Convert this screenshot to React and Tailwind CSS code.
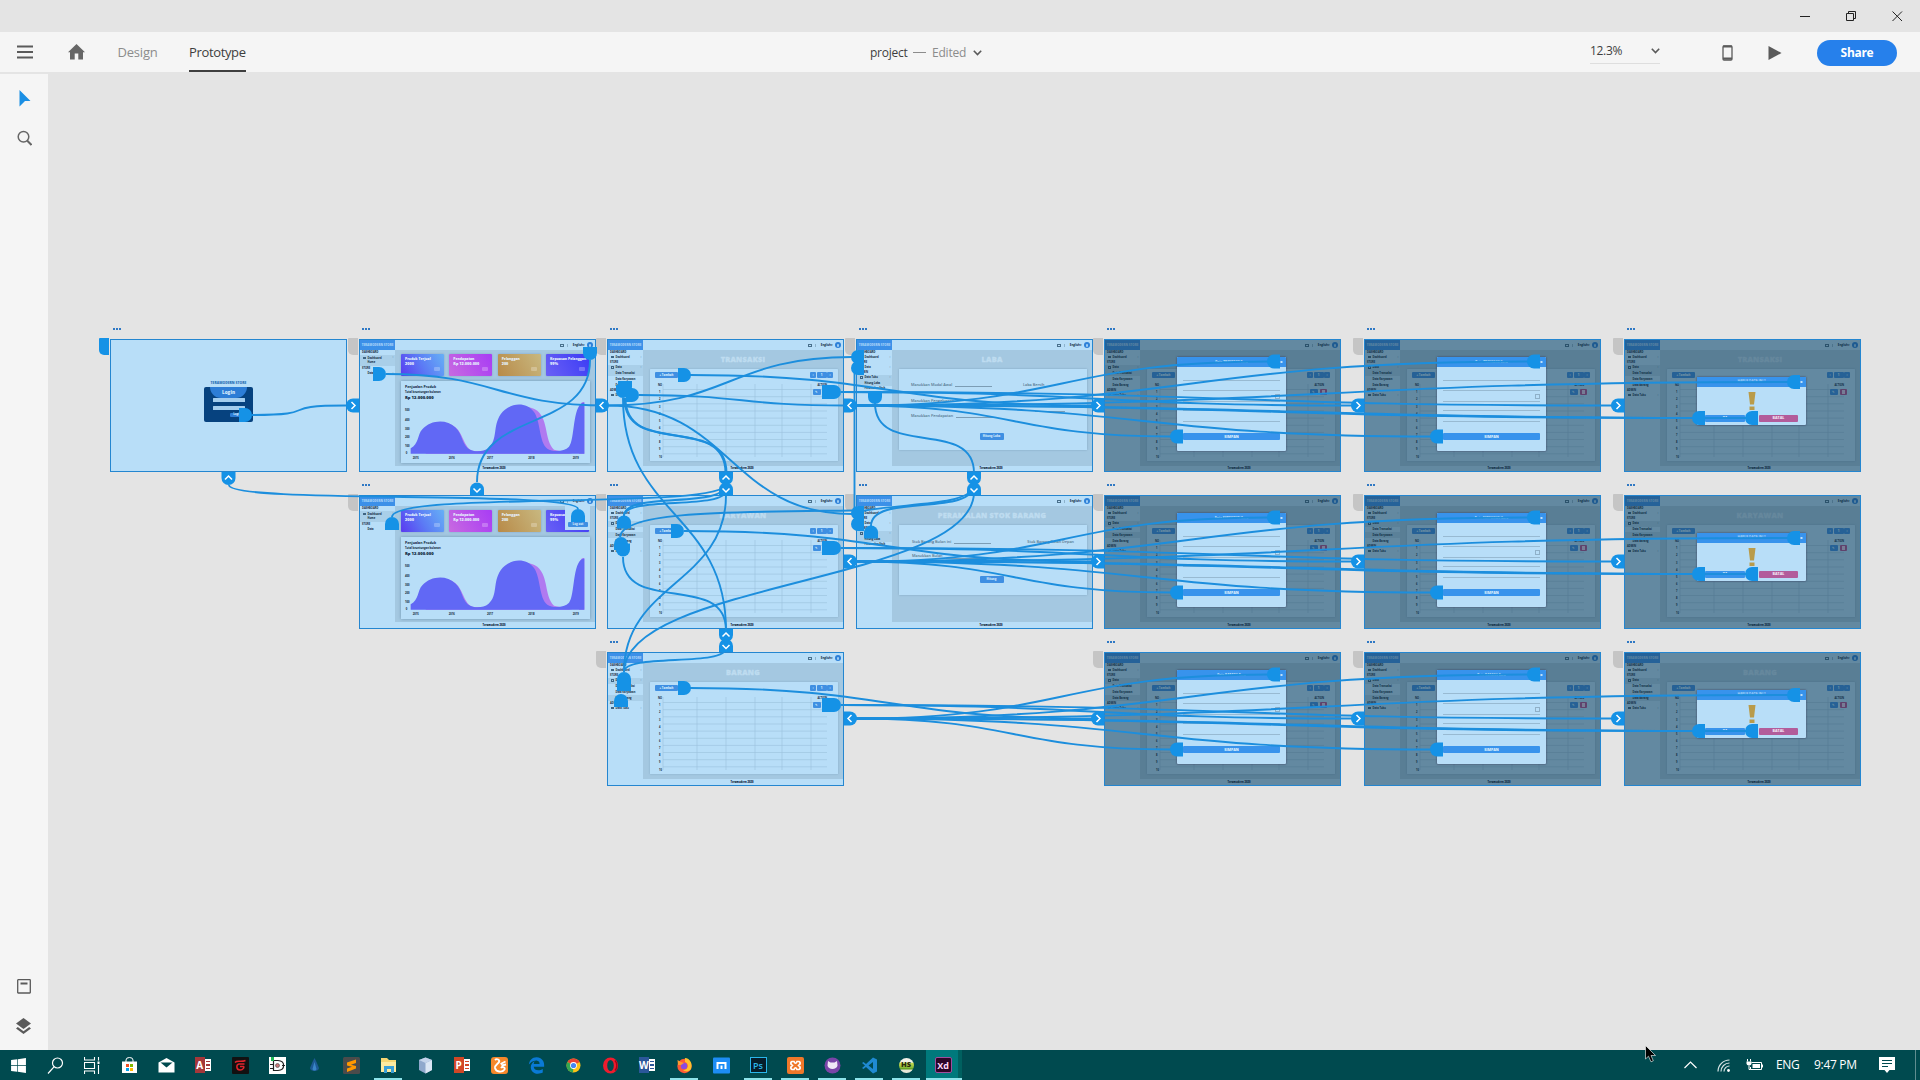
import React from 'react';
import { FaEdgeLegacy, FaWindows } from 'react-icons/fa6';

const X = { c1: 110, c2: 359, c3: 607, c4: 856, c5: 1104, c6: 1364, c7: 1624 };
const Y = [339, 495, 652];

/* ---------- artboard pieces ---------- */

function MenuRow({ label, head, sub, hi, arrow, h = 'h-[5.6px]' }) {
  return (
    <div className={`flex items-center shrink-0 ${h} ${hi ? 'bg-[#a9cfe9]' : ''} ${head ? 'pl-[2px]' : sub ? 'pl-[7.5px]' : 'pl-[3px]'}`}>
      {!head && !sub && <span className="mr-[2px] h-[2.6px] w-[2.6px] border-[0.5px] border-[#3f6482]" />}
      <span className="text-[2.6px] leading-none font-bold whitespace-nowrap text-[#10293d]">{label}</span>
      {arrow && <span className="ml-auto mr-[1.5px] text-[3px] leading-none text-[#3d617c]">›</span>}
    </div>
  );
}

function Sidebar({ kind }) {
  if (kind === 'dash') {
    return (
      <div className="flex h-full w-[35px] shrink-0 flex-col">
        <MenuRow head label="DASHBOARD" h="h-[5px]" />
        <div className="bg-[#a9cfe9] pb-[1px]"><MenuRow label="Dashboard" arrow /><MenuRow sub label="Home" h="h-[4px]" /></div>
        <MenuRow head label="STORE" h="h-[5px]" />
        <MenuRow sub label="Data" h="h-[6px]" arrow />
      </div>
    );
  }
  const form = kind === 'form';
  return (
    <div className="flex h-full w-[35px] shrink-0 flex-col">
      <MenuRow head label="DASHBOARD" h="h-[4.5px]" />
      <MenuRow label="Dashboard" arrow h="h-[5px]" />
      <MenuRow head label="STORE" h="h-[5px]" />
      <MenuRow label="Data" arrow hi={!form} h="h-[6px]" />
      {form ? (
        <>
          <MenuRow head label="ADMIN" h="h-[4px]" />
          <MenuRow label="Data Toko" arrow hi h="h-[5.5px]" />
          <MenuRow sub label="Hitung Laba" hi />
          <MenuRow sub label="Peramalan Stok" />
        </>
      ) : (
        <>
          <MenuRow sub label="Data Transaksi" hi={kind === 'TRANSAKSI'} />
          <MenuRow sub label="Data Karyawan" hi={kind === 'KARYAWAN'} h="h-[6px]" />
          <MenuRow sub label="Data Barang" hi={kind === 'BARANG'} h="h-[6px]" />
          <MenuRow head label="ADMIN" h="h-[5px]" />
          <MenuRow label="Data Toko" arrow h="h-[4px]" />
        </>
      )}
    </div>
  );
}

function BoardHeader() {
  return (
    <div className="flex h-[10px] shrink-0 items-center">
      <div className="flex h-full w-[35px] items-center justify-center bg-[#3c90e8]">
        <span className="whitespace-nowrap text-[3px] leading-none font-black text-[#a5d2f8]">TERAMODERN STORE</span>
      </div>
      <div className="ml-auto mr-[2px] flex items-center">
        <span className="h-[3px] w-[3.6px] border-[0.5px] border-[#49708c]" />
        <span className="ml-[3px] mr-[5px] h-[3px] w-[1px] bg-[#8db3cd]" />
        <span className="text-[2.8px] leading-none font-bold text-[#0c2438]">English ▾</span>
        <span className="ml-[1.5px] flex h-[6px] w-[6px] items-center justify-center rounded-full bg-[#2d80d8]">
          <span className="h-[3px] w-[2px] rounded-full bg-[#9ccdf5]" />
        </span>
      </div>
    </div>
  );
}

function Pill({ children, cls }) {
  return (
    <span className={`flex items-center justify-center rounded-[1px] bg-[#3f8fe2] text-[2.8px] leading-none font-black text-[#cfe8fb] ${cls}`}>
      {children}
    </span>
  );
}

function TableCard() {
  return (
    <div className="ml-[7px] mr-[5px] h-[92px] shrink-0 rounded-[0.5px] bg-[#b8def8] px-[5px] pt-[3px] shadow-[0_0_2px_#7ea6c0]">
      <div className="flex h-[6px] justify-between">
        <Pill cls="w-[23px] h-[6px]">+ Tambah</Pill>
        <div className="flex gap-[0.5px]">
          <Pill cls="w-[6px] h-[6px]">‹</Pill>
          <Pill cls="w-[10px] h-[6px]">1</Pill>
          <Pill cls="w-[6px] h-[6px]">›</Pill>
        </div>
      </div>
      <div className="mt-[4.5px] flex h-[5px] items-center justify-between pl-[3px] pr-[6px] text-[2.5px] leading-none font-bold text-[#0c2438]">
        <span>NO</span><span>ACTION</span>
      </div>
      <div className="relative mt-[1.5px] h-[72px]">
        {[1, 2, 3, 4, 5, 6, 7, 8, 9, 10].map((n) => (
          <div key={n} className="ml-[3px] mr-[6px] flex h-[7.15px] items-center pl-[1px]">
            <span className="text-[2.5px] leading-none font-bold text-[#0c2438]">{n}</span>
          </div>
        ))}
        <svg className="absolute left-0 top-[-5.5px] h-[78px] w-[178px]" viewBox="0 0 178 78" stroke="#9ac1dc" strokeWidth="0.6">
          <path d="M8 0V73M42 0V73M71 0V73M100 0V73M127 0V73M156 0V73" />
          <path d="M8 5.500H172M8 12.700H172M8 19.800H172M8 27H172M8 34.100H172M8 41.300H172M8 48.400H172M8 55.500H172M8 62.700H172M8 69.800H172" />
        </svg>
        <div className="absolute right-[3px] top-0 flex gap-[2px]">
          <Pill cls="w-[7.5px] h-[6px]">✎</Pill>
          <span className="flex h-[6px] w-[7.5px] items-center justify-center rounded-[1px] bg-[#b0508f]"><span className="h-[3.5px] w-[2.6px] bg-[#e0c5e0]" /></span>
        </div>
      </div>
    </div>
  );
}

function BoardTitle({ children }) {
  return (
    <div className="flex h-[19px] shrink-0 items-center justify-center pt-[0.5px] text-[7.4px] leading-none font-black tracking-[0.25px] whitespace-nowrap text-[#bedcf0] [-webkit-text-stroke:0.35px_#bedcf0]">
      {children}
    </div>
  );
}

function Field({ label, line }) {
  return (
    <div className="flex items-end gap-[3px] text-[3.8px] leading-none font-semibold whitespace-nowrap text-[#51748d]">
      <span>{label}</span>
      {line && <span className="h-[0.6px] w-[37px] bg-[#7c9db5]" />}
    </div>
  );
}

function LabaCard() {
  return (
    <div className="ml-[7px] mr-[5px] flex h-[81px] flex-col bg-[#b8def8] px-[12px] pt-[14px] shadow-[0_0_2px_#7ea6c0]">
      <div className="flex justify-between"><Field label="Masukkan Modal Awal" line /><Field label="Laba Bersih" /><span /></div>
      <div className="mt-[12.5px] flex"><Field label="Masukkan Pengeluaran" /></div>
      <div className="mt-[8px] flex justify-between"><span /><span className="mr-[10px] h-[0.6px] w-[30px] bg-[#7c9db5]" /></div>
      <div className="mt-[2.5px]"><Field label="Masukkan Pendapatan" line /></div>
      <div className="mt-[15px] flex justify-center pr-[3px]"><Pill cls="w-[24px] h-[7px]">Hitung Laba</Pill></div>
    </div>
  );
}

function StokCard() {
  return (
    <div className="ml-[7px] mr-[5px] flex h-[70px] flex-col bg-[#b8def8] px-[13px] pt-[14.5px] shadow-[0_0_2px_#7ea6c0]">
      <div className="flex justify-between"><Field label="Stok Barang Bulan ini" line /><Field label="Stok Barang Bulan Depan" /></div>
      <div className="mt-[11px]"><Field label="Masukkan Bulan" line /></div>
      <div className="mt-[17.5px] flex justify-center pr-[3px]"><Pill cls="w-[24px] h-[7px]">Hitung</Pill></div>
    </div>
  );
}

const CARDS = [
  ['Produk Terjual', '2000', 'bg-[linear-gradient(60deg,#5a3af0,#5c7cf5_50%,#66b0f6)]'],
  ['Pendapatan', 'Rp 12.000.000', 'bg-[linear-gradient(60deg,#c86ae0,#a83cf5)]'],
  ['Pelanggan', '200', 'bg-[linear-gradient(60deg,#b88a48,#c8b880)]'],
  ['Kepuasan Pelanggan', '99%', 'bg-[linear-gradient(60deg,#6a60f5,#3c3cf5)]'],
];

function Dashboard({ popup }) {
  return (
    <div className="flex grow flex-col">
      <div className="flex justify-between pl-[6px] pr-[6px] pt-[3.5px]">
        {CARDS.map(([a, b, bg]) => (
          <div key={a} className={`flex h-[22px] w-[43px] flex-col rounded-[1px] pl-[4px] pt-[3px] font-black text-[#e6f1fd] shadow-[0_0_2px_#7a9cc0] ${bg}`}>
            <span className="text-[3.4px] leading-[4px] whitespace-nowrap">{a}</span>
            <span className="text-[3.8px] leading-[5px] whitespace-nowrap">{b}</span>
            <span className="ml-auto mr-[4px] mt-[1px] h-[4.5px] w-[6px] rounded-[1px] bg-[#ffffff40]" />
          </div>
        ))}
      </div>
      <div className="relative ml-[6px] mt-[5.5px] h-[82px] w-[189px] bg-[#b8def8] pl-[4px] pt-[4px] font-bold text-[#0c2438] shadow-[0_0_3px_#6f97b2]">
        <div className="text-[3.5px] leading-[4.5px]">Penjualan Produk</div>
        <div className="text-[2.7px] leading-[4px] font-bold">Total keuntungan bulanan</div>
        <div className="mt-[1.5px] text-[4.2px] leading-[6px] font-black">Rp 12.000.000</div>
        <svg className="absolute inset-0 h-[82px] w-[189px]" viewBox="126 125 567 246">
          <g fill="#b07af0">
            <path d="M200 343C225 290 215 248 262 251C310 262 305 300 330 328C340 337 350 335 372 335C415 335 430 300 465 240C485 195 505 198 535 214C570 245 555 300 585 331L640 343Z" />
            <path d="M660 343V215Q662 190 672 188H676V343Z" />
          </g>
          <path fill="#6168f5" d="M155 343V327C180 315 175 285 190 270C215 242 262 238 290 265C312 285 308 320 335 332C350 338 375 337 388 326C418 300 400 262 425 225C450 190 500 185 525 218C545 245 540 310 565 328C580 338 615 338 630 322C648 300 640 200 672 190H676V343Z" />
          <g fontSize="8" fontWeight="700" fill="#0c2438">
            <text x="138" y="216">500</text><text x="138" y="246">400</text><text x="138" y="273">300</text><text x="138" y="297">200</text><text x="138" y="324">100</text><text x="140" y="345">0</text>
            <text x="161" y="360">2015</text><text x="269" y="360">2016</text><text x="384" y="360">2017</text><text x="508" y="360">2018</text><text x="641" y="360">2019</text>
          </g>
        </svg>
      </div>
      {popup && (
        <div className="absolute right-[5px] top-[9px] flex h-[25px] w-[25px] flex-col justify-end bg-[#b8def8] p-[3px]">
          <Pill cls="h-[5px] w-[20px]">Log out</Pill>
        </div>
      )}
    </div>
  );
}

function FormModal({ title }) {
  return (
    <div className="absolute left-[72px] top-[17px] flex h-[94px] w-[109px] flex-col rounded-[1px] bg-[#b8def8] shadow-[0_0_2px_#335]">
      <div className="flex h-[10px] items-center justify-center rounded-t-[1px] bg-[#3893ec] text-[3px] leading-none font-bold text-[#cfe8fb]">
        {title}
      </div>
      <div className="flex grow flex-col px-[6px]">
        <span className="h-[14px] border-b-[0.7px] border-[#98bad2]" />
        <span className="h-[10px] border-b-[0.7px] border-[#98bad2]" />
        <span className="flex h-[10px] items-center justify-end"><span className="h-[5px] w-[5px] border-[1px] border-[#8fb0c8]" /></span>
        <span className="h-[10px] border-y-[0.7px] border-[#98bad2]" />
        <span className="h-[11px] border-b-[0.7px] border-[#98bad2]" />
        <span className="mt-[11px] flex h-[7px] items-center justify-center rounded-[1px] bg-[#3893ec] text-[3.6px] leading-none font-black text-[#dceefc]">SIMPAN</span>
      </div>
    </div>
  );
}

function WarnModal() {
  return (
    <div className="absolute left-[72px] top-[37px] flex h-[48px] w-[109px] flex-col rounded-[1px] bg-[#b8def8] shadow-[0_0_2px_#335]">
      <div className="flex h-[10px] items-center justify-center bg-[#3893ec] text-[3.2px] leading-none font-bold text-[#a5d2f8]">HAPUS DATA INI ?</div>
      <svg className="mx-auto mt-[5px] h-[18px] w-[8px]" viewBox="0 0 8 18" fill="#b99b4a"><path d="M0.5 0H7.5L6 12.5H2ZM1.5 14.5H6.5V18H1.5Z" /></svg>
      <div className="mt-[4.5px] flex gap-[14px] px-[8px]">
        <span className="flex h-[7px] w-[40px] items-center justify-center rounded-[1px] bg-[#3893ec] text-[3.4px] leading-none font-black text-[#cfe8fb]">YA</span>
        <span className="flex h-[7px] w-[39px] items-center justify-center rounded-[1px] bg-[#b25c9b] text-[3.6px] leading-none font-black text-[#f2e2f2]">BATAL</span>
      </div>
    </div>
  );
}

function Artboard({ x, y, kind, title, modal, popup }) {
  const dark = !!modal;
  return (
    <>
      <div className="absolute flex gap-[1px]" style={{ left: x + 3, top: y - 11 }}>
        <i className="h-[2px] w-[2px] bg-[#2f78c4]" /><i className="h-[2px] w-[2px] bg-[#2f78c4]" /><i className="h-[2px] w-[2px] bg-[#2f78c4]" />
      </div>
      <div
        className={`absolute h-[17px] w-[10px] rounded-bl-[5px] rounded-tl-[1px] ${kind === 'login' ? 'bg-[#1592e6]' : 'bg-[#c5c5c5]'}`}
        style={{ left: x - 11, top: y - 1 }}
      />
      <div
        className={`absolute flex w-[237px] flex-col overflow-hidden border border-[#2486d0] bg-[#b8def8] ${y === Y[0] ? 'h-[133px]' : 'h-[134px]'}`}
        style={{ left: x, top: y }}
      >
        {kind === 'login' ? (
          <div className="flex h-full flex-col items-center pt-[39.5px]">
            <span className="text-[3.4px] leading-[5px] font-black text-[#2a6fb5]">TERAMODERN STORE</span>
            <div className="mt-[2px] flex h-[35px] w-[49px] flex-col items-center overflow-hidden rounded-[2px] bg-[#06427f]">
              <div className="flex h-[11px] w-[37px] shrink-0 items-center justify-center rounded-b-[18px] bg-[#2d7dd6] text-[4.6px] leading-none font-black text-[#d5eafb]">Login</div>
              <span className="mt-[0.5px] h-[4px] w-[32px] rounded-[0.5px] bg-[#a3cdee]" />
              <span className="mt-[3.5px] h-[4px] w-[32px] rounded-[0.5px] bg-[#a3cdee]" />
              <span className="mt-[3px] ml-[17px] flex h-[4.5px] w-[15px] items-center justify-center rounded-[1px] bg-[#2d7dd6] text-[2.8px] leading-none font-bold text-[#d5eafb]">Login</span>
            </div>
          </div>
        ) : (
          <>
            <BoardHeader />
            <div className="flex min-h-0 grow">
              <Sidebar kind={kind === 'table' ? title : kind} />
              <div className="flex grow flex-col">
                <div className="flex h-[116px] shrink-0 flex-col bg-[#a4c8e1]">
                  {kind === 'dash' ? <Dashboard popup={popup} /> : (
                    <>
                      <BoardTitle>{modal === 'form' ? '' : title}</BoardTitle>
                      {kind === 'table' && <TableCard />}
                      {title === 'LABA' && <LabaCard />}
                      {title === 'PERAMALAN STOK BARANG' && <StokCard />}
                    </>
                  )}
                </div>
                <div className="flex grow items-center justify-center pr-[2px] text-[2.6px] leading-none font-black text-[#0c2438]">Teramodern 2020</div>
              </div>
            </div>
          </>
        )}
        {dark && <div className="absolute inset-0 bg-[#0e344a]/50" />}
        {modal === 'form' && <FormModal title={`Data ${title} Baru`} />}
        {modal === 'warn' && <WarnModal />}
      </div>
    </>
  );
}

const BOARDS = [
  { x: X.c1, y: Y[0], kind: 'login' },
  { x: X.c2, y: Y[0], kind: 'dash' },
  { x: X.c2, y: Y[1], kind: 'dash', popup: true },
  { x: X.c4, y: Y[0], kind: 'form', title: 'LABA' },
  { x: X.c4, y: Y[1], kind: 'form', title: 'PERAMALAN STOK BARANG' },
];
['TRANSAKSI', 'KARYAWAN', 'BARANG'].forEach((title, i) => {
  BOARDS.push({ x: X.c3, y: Y[i], kind: 'table', title });
  BOARDS.push({ x: X.c5, y: Y[i], kind: 'table', title, modal: 'form' });
  BOARDS.push({ x: X.c6, y: Y[i], kind: 'table', title, modal: 'form' });
  BOARDS.push({ x: X.c7, y: Y[i], kind: 'table', title, modal: 'warn' });
});

/* ---------- prototype wires ---------- */

/* short wires get proportionally longer handles, so they bend harder in the middle */
const handle = (d) => d * Math.min(0.8, Math.max(0.5, 73 / Math.abs(d)));
const hWire = (x1, y1, x2, y2) => {
  const k = handle(x2 - x1);
  return `M${x1} ${y1}C${x1 + k} ${y1} ${x2 - k} ${y2} ${x2} ${y2}`;
};
const vWire = (x1, y1, x2, y2) => {
  const k = handle(y2 - y1);
  return `M${x1} ${y1}C${x1} ${y1 + k} ${x2} ${y2 - k} ${x2} ${y2}`;
};

const WIRES = [
  hWire(252, 415, 346, 405.5),
  hWire(386, 374, 608, 405.5),
  hWire(608, 405.5, 852, 357),
  hWire(608, 405.5, 852, 514),
  hWire(639, 395, 845, 405.5),
  'M854.5 372V512',
  vWire(875, 403, 974, 473),
  vWire(590, 360, 477, 482),
  vWire(229, 485, 578, 509),
  vWire(392, 517, 726, 484),
  vWire(624, 516, 726, 484),
  vWire(624, 516, 726, 490),
  vWire(623, 557, 726, 630),
  'M620 537C622 511 730 512 852 510.5',
  vWire(623, 398, 726, 630),
  vWire(624.5, 398, 725.5, 473),
  vWire(625.5, 398, 726.5, 473),
  vWire(726, 495, 624, 672),
  vWire(624, 672, 726, 648),
  vWire(624, 672, 974, 492),
  vWire(871, 526, 974, 484),
  'M862 511C905 503 966 506 974 487',
];
Y.forEach((y, i) => {
  const m = y + 66.5;
  WIRES.push(
    hWire(i === 1 ? 684 : 690, y + 36, 1092, m),
    hWire(841, y + 53, 1352, m),
    hWire(841, y + 53, 1612, m),
    hWire(856, m, 1268, y + 22.5),
    hWire(856, m, 1171, y + 97.5),
    hWire(856, m, 1528, y + 22.5),
    hWire(856, m, 1431, y + 97.5),
    hWire(856, m, 1788, y + 43),
    hWire(856, m, 1692, y + 79),
    hWire(856, m, 1746, y + 79),
  );
});

/* the key names the rounded side: right, left, top, bottom */
const SHAPES = {
  r: 'M0 0H6A7 7 0 0 1 6 14H0Z',
  l: 'M13 0H7A7 7 0 0 0 7 14H13Z',
  t: 'M0 13V7A7 7 0 0 1 14 7V13Z',
  b: 'M0 0V6A7 7 0 0 0 14 6V0Z',
};
const CHEV = { '>': 'M5.5 3.5L9 7L5.5 10.5', '<': 'M7.5 3.5L4 7L7.5 10.5', '^': 'M3.5 7.5L7 4L10.5 7.5', v: 'M3.5 6L7 9.5L10.5 6' };

const NODES = [
  [239, 408, 'r'], [346, 398.5, 'l', '>'], [373, 367, 'r'], [596, 398.5, 'r', '<'],
  [583, 347, 'b'], [470, 482.5, 't', 'v'], [221.5, 472, 'b', '^'], [571, 509, 't'], [385, 517, 't'],
  [617, 515.5, 't'], [614, 537, 't'], [616, 543.5, 'b'],
  [616, 385, 'b'], [618, 381, 'b'], [626, 388, 'r'],
  [851, 350, 'l'], [851, 361, 'l'], [851, 506, 'l'], [851, 517, 'l'],
  [868, 391, 'b'], [864, 525.5, 't'],
  [617, 672, 't'], [617, 678, 't'], [614, 694, 't'],
  [719, 472, 'b', '^'], [719, 482.5, 't', 'v'], [967, 472, 'b', '^'], [967, 482.5, 't', 'v'],
  [719, 629, 'b', '^'], [719, 639, 't', 'v'],
];
Y.forEach((y, i) => {
  NODES.push(
    [i === 1 ? 671 : 678, y + 29, 'r'], [822, y + 46, 'r'], [828, y + 46, 'r'],
    [844, y + 59.5, 'r', '<'], [1091, y + 59.5, 'l', '>'], [1351, y + 59.5, 'l', '>'], [1611, y + 59.5, 'l', '>'],
    [1267, y + 15.5, 'l'], [1170, y + 90.5, 'l'], [1527, y + 15.5, 'l'], [1430, y + 90.5, 'l'],
    [1787, y + 36, 'l'], [1692, y + 72, 'l'], [1745, y + 72, 'l'],
  );
});

function Wires() {
  return (
    <svg className="pointer-events-none absolute left-0 top-0 h-[1080px] w-[1920px]" viewBox="0 0 1920 1080" fill="none">
      <g stroke="#1c8edd" strokeWidth="1.9">{WIRES.map((d, i) => <path key={i} d={d} />)}</g>
      {NODES.map(([x, y, s, c], i) => (
        <g key={i} transform={`translate(${x} ${y})`}>
          <path d={SHAPES[s]} fill="#1592e6" />
          {c && <path d={CHEV[c]} stroke="#fff" strokeWidth="1.5" />}
        </g>
      ))}
      <g fill="#bfe0f8">
        {Y.map((y) => <path key={y} d={`M1280.5 ${y + 22}h2v2h-2zM1540.5 ${y + 22}h2v2h-2zM1800.5 ${y + 42}h2v2h-2z`} />)}
      </g>
    </svg>
  );
}

/* ---------- application chrome ---------- */

function TitleBar() {
  return (
    <div className="flex h-8 shrink-0 items-center justify-end bg-[#e4e4e4]">
      <svg className="h-8 w-[140px]" viewBox="0 0 140 32" fill="none" stroke="#222" strokeWidth="1">
        <path d="M20 16.500H30" />
        <path d="M66.500 13.500H73.500V20.500H66.500ZM68.500 13.500V11.500H75.500V18.500H73.500" />
        <path d="M112.500 11.500L122 21M122 11.500L112.500 21" />
      </svg>
    </div>
  );
}

function Chevron() {
  return <svg className="h-[6px] w-[9px]" viewBox="0 0 9 6" fill="none" stroke="#5a5a5a" strokeWidth="1.6"><path d="M0.800 0.800L4.500 4.600L8.200 0.800" /></svg>;
}

function Toolbar() {
  return (
    <div className="flex h-[40px] shrink-0 items-center bg-[#f5f5f5] text-[13px] text-[#3e3e3e]">
      <div className="flex w-[660px] items-center self-stretch pl-[17px]">
        <svg className="h-[14px] w-4" viewBox="0 0 16 14" fill="#5a5a5a"><path d="M0 0.500H16V2.500H0ZM0 6H16V8H0ZM0 11.500H16V13.500H0Z" /></svg>
        <svg className="ml-[34.5px] h-[16px] w-[17px]" viewBox="0 0 17 16" fill="#666"><path d="M8.500 0L17 8.200H15V15.500H10.300V9.500H6.700V15.500H2V8.200H0Z" /></svg>
        <span className="ml-[33px] w-[40px] pt-[1px] whitespace-nowrap tracking-[-0.2px] text-[#8c8c8c]">Design</span>
        <span className="ml-[31.5px] flex w-[57px] items-center self-stretch whitespace-nowrap border-b-2 border-[#3e3e3e] pt-[3px] tracking-[-0.35px]">Prototype</span>
      </div>
      <div className="flex grow items-center pl-[210px] pt-[1px] text-[12px] whitespace-nowrap">
        <span className="w-[43px] tracking-[-0.25px]">project</span>
        <span className="mr-[6px] h-px w-[13px] bg-[#8c8c8c]" />
        <span className="w-[41px] tracking-[-0.2px] text-[#8c8c8c]">Edited</span>
        <Chevron />
      </div>
      <div className="flex h-[24px] w-[70px] items-center justify-between border-b border-[#dedede] pb-[1px] text-[12px] tracking-[-0.3px]">
        <span>12.3%</span><Chevron />
      </div>
      <svg className="ml-[62px] mt-[1px] h-[16px] w-[11px]" viewBox="0 0 11 16"><rect x="1" y="1" width="9" height="14" rx="1" fill="none" stroke="#5a5a5a" strokeWidth="1.300" /><path d="M1 1.500H10M1 13.500H10" stroke="#5a5a5a" strokeWidth="2" /></svg>
      <svg className="ml-[34.5px] mt-[1px] h-[14px] w-[14px]" viewBox="0 0 14 14" fill="#5a5a5a"><path d="M0.500 0L13.500 7L0.500 14Z" /></svg>
      <div className="mt-[1px] ml-[35.5px] mr-[23px] flex h-[26px] w-[80px] items-center justify-center rounded-full bg-[#2680eb] text-[12px] font-bold tracking-[-0.3px] text-white">Share</div>
    </div>
  );
}

function ToolRail() {
  return (
    <div className="mt-[2px] flex w-[48px] flex-col items-center bg-[#f5f5f5] pt-4 pb-[15px]">
      <svg className="ml-[1px] h-[17px] w-[12px]" viewBox="0 0 12 17" fill="#1b8fe4"><path d="M0.500 0L11.500 11H6L0.500 16.500Z" /></svg>
      <svg className="mt-[23px] h-[16px] w-[15px]" viewBox="0 0 15 16" fill="none" stroke="#666" strokeWidth="1.500"><circle cx="6.500" cy="6.800" r="5.300" /><path d="M10.300 10.800L14.500 15" strokeWidth="2" /></svg>
      <svg className="mt-auto h-[15px] w-[14px]" viewBox="0 0 14 15" fill="none" stroke="#5a5a5a" strokeWidth="1.300"><rect x="0.700" y="0.700" width="12.600" height="13.300" rx="0.500" /><path d="M3.500 4.500H10.500" strokeWidth="2" /></svg>
      <svg className="mt-[24px] mr-[1px] h-[17px] w-[15px]" viewBox="0 0 15 17" fill="#5a5a5a"><path d="M7.500 0L15 5.500L7.500 11L0 5.500Z" /><path d="M1.800 9L0 10.500L7.500 16L15 10.500L13.200 9L7.500 13.200Z" /></svg>
    </div>
  );
}

const S = ({ children, ...p }) => <svg className="h-[17px] w-[17px]" viewBox="0 0 17 17" fill="none" {...p}>{children}</svg>;

function OfficeIcon({ letter, bg, fg }) {
  return (
    <div className="flex h-[16px] w-[16px] items-center">
      <span className={`z-10 flex h-[16px] w-[9.5px] items-center justify-center text-[10px] leading-none font-bold text-white ${bg}`}>{letter}</span>
      <span className={`flex h-[12px] w-[6.5px] flex-col justify-evenly bg-white pl-[1px] ${fg}`}>
        <i className="h-[1.5px] w-[4.5px] bg-current" /><i className="h-[1.5px] w-[4.5px] bg-current" /><i className="h-[1.5px] w-[4.5px] bg-current" />
      </span>
    </div>
  );
}

const APPS = [
  { n: 'start', i: <FaWindows className="h-[17px] w-[17px] text-white" /> },
  { n: 'search', i: <S stroke="#fff" strokeWidth="1.200"><circle cx="10.500" cy="6" r="5" /><path d="M7 9.800L1 16.500" /></S> },
  { n: 'view', i: <S stroke="#fff" strokeWidth="1.100"><path d="M0.500 0V3H10.500V0M0.500 17V14H10.500V17M0.500 5.500H10.500V11.500H0.500ZM14.500 0V3.500M14.500 8V17" /><path d="M13.500 4.500H15.500V7H13.500Z" fill="#fff" stroke="none" /></S> },
  { n: 'store', i: <S><path d="M5 5V3A3.500 2.500 0 0 1 12 3V5" stroke="#fff" /><path d="M1 4.500H16V16H1Z" fill="#fff" /><path d="M5 7H8V10H5Z" fill="#f25022" /><path d="M9 7H12V10H9Z" fill="#7fba00" /><path d="M5 11H8V14H5Z" fill="#00a4ef" /><path d="M9 11H12V14H9Z" fill="#ffb900" /></S> },
  { n: 'mail', i: <S fill="#fff"><path d="M0.500 5.500L8.500 1L16.500 5.500V15.500H0.500Z" /><path d="M2.500 5.500H14.500L8.500 10.500Z" fill="#004a4f" /></S> },
  { n: 'access', i: <OfficeIcon letter="A" bg="bg-[#a4373a]" fg="text-[#a4373a]" /> },
  { n: 'garena', i: <S><rect width="17" height="17" rx="1" fill="#111" /><path d="M3 5.500C5 3 9 5.500 13.500 3.500M12.500 7H7C4 7.500 4 13 8 13C11.500 13 12.500 10 11.500 9.500H8" stroke="#e0242c" strokeWidth="1.500" /></S> },
  { n: 'dolphin', i: <S><rect width="17" height="17" fill="#fff" /><path d="M4.500 3.500V13.500H9C16.500 13 16.500 4 9 3.500ZM1 7.500H5M1 11.500H5M13 8.500H16" stroke="#222" strokeWidth="1.200" /><circle cx="8.500" cy="8.500" r="2" fill="#c77" stroke="#444" strokeWidth="0.600" /><path d="M2 0H5V4H2Z" fill="#1db954" /></S> },
  { n: 'drop', i: <S><path d="M8.500 1L10.500 5L13 11C13 15 4 15 4 11L6.500 5Z" fill="#1d5a94" /><path d="M8.500 5L10.500 12C10 14 7 14 6.500 12Z" fill="#3b86c8" /></S> },
  { n: 'sublime', i: <S><rect width="17" height="17" rx="1.500" fill="#4b4b4b" /><path d="M4 5.500L13 2.500V6L8 7.700L13 9V11.500L4 15V11.500L9 9.800L4 8.500Z" fill="#ff9800" /></S> },
  { n: 'explorer', run: 1, i: <S><path d="M1 1H7L9 3H16V15H1Z" fill="#f6d673" /><path d="M1 5H16V15H1Z" fill="#fdeaa0" /><path d="M4 9H14V16H11V12H7V16H4Z" fill="#3aa0d8" /></S> },
  { n: 'box', i: <S><path d="M8.500 0.500L15 3V13L8.500 16.500L2 13V3Z" fill="#8fa8cc" /><path d="M8.500 6L15 3V13L8.500 16.500Z" fill="#dbe6f4" /><path d="M8.500 0.500L15 3L8.500 6L2 3Z" fill="#c3d3ea" /></S> },
  { n: 'powerpoint', i: <OfficeIcon letter="P" bg="bg-[#d24726]" fg="text-[#d24726]" /> },
  { n: 'uc', i: <S><rect width="17" height="17" rx="3" fill="#f6882b" /><path d="M4 3C6 1 9 3 8 5C7 7 3.500 8 4 11C5 15 11 16 13.500 12.500C14.500 10.500 11.500 9 10 11M9.500 7L14.500 4.500M10.500 8.500L15 7.500" stroke="#fff" strokeWidth="1.900" /></S> },
  { n: 'edge', i: <FaEdgeLegacy className="h-[17px] w-[17px] text-[#0a7ad6]" /> },
  { n: 'chrome', i: <S><circle cx="8.500" cy="8.500" r="7" fill="#fbc116" /><path d="M8.500 8.500L2.500 5A7 7 0 0 1 14.600 5Z" fill="#e94335" /><path d="M8.500 8.500L2.500 5A7 7 0 0 0 8 15.500Z" fill="#34a853" /><circle cx="8.500" cy="8.500" r="3.400" fill="#fff" /><circle cx="8.500" cy="8.500" r="2.600" fill="#4285f4" /></S> },
  { n: 'opera', i: <S><path fillRule="evenodd" d="M8.500 0.500A7.500 8 0 0 1 8.500 16.500A7.500 8 0 0 1 8.500 0.500ZM8.500 3A3.300 5.500 0 0 0 8.500 14A3.300 5.500 0 0 0 8.500 3Z" fill="#ee1c2e" /><path d="M13 3.500C15.500 6 15.500 11 13 13.500" stroke="#a70014" strokeWidth="1.500" /></S> },
  { n: 'word', i: <OfficeIcon letter="W" bg="bg-[#2b579a]" fg="text-[#2b579a]" /> },
  { n: 'firefox', run: 1, i: <S><circle cx="8.500" cy="9" r="7.200" fill="#ff5a36" /><path d="M9 1C14 1 17 7 15 12C13 15 9 15 7 13C13 13 13 6 9 5Z" fill="#ffc02e" /><circle cx="8" cy="9" r="3.200" fill="#8a4be0" /><path d="M1.500 3L5 5L8 6L5 8L2 8Z" fill="#ff9a2e" /></S> },
  { n: 'maxthon', i: <S><rect width="17" height="16" y="0.500" rx="1" fill="#1d8df5" /><path d="M4.500 12V6H12.500V12M8.500 8.500V12" stroke="#fff" strokeWidth="2" /></S> },
  { n: 'photoshop', run: 1, i: <div className="flex h-[16px] w-[17px] items-center justify-center border border-[#2ab6ea] bg-[#061e2b] text-[9px] leading-none font-semibold text-[#2ab6ea]">Ps</div> },
  { n: 'xampp', run: 1, i: <S><rect width="17" height="17" rx="2" fill="#f0782a" /><path d="M5 4.500H7Q8.500 8 10 4.500H12Q13.500 5 13 7L11.500 8.500L13 10Q13.500 12 12 12.500H10Q8.500 9 7 12.500H5Q3.500 12 4 10L5.500 8.500L4 7Q3.500 5 5 4.500Z" stroke="#fff" strokeWidth="1.700" /></S> },
  { n: 'github', run: 1, i: <S><circle cx="8.500" cy="8.500" r="8" fill="#7a45a8" /><path d="M4 4L6.500 5.500H10.500L13 4L13.500 8.500C13 13 4 13 3.500 8.500Z" fill="#f0e8f6" /></S> },
  { n: 'vscode', run: 1, i: <S><path d="M12 0.500L16 2.500V14.500L12 16.500L5 10L2.500 12L1 11L4 8.500L1 6L2.500 5L5 7Z" fill="#1f8ad2" /><path d="M12 5V12L7.500 8.500Z" fill="#004a4f" /></S> },
  { n: 'heidi', run: 1, i: <div className="flex h-[15px] w-[15px] items-center justify-center rounded-full bg-[linear-gradient(#f2f2ea_28%,#c8d850_34%,#86b838_65%,#5a9a20_72%,#e8e8d8_82%)] text-[7.5px] leading-none font-extrabold text-[#2a2a10]">HS</div> },
  { n: 'xd', act: 1, i: <div className="flex h-[16px] w-[17px] items-center justify-center rounded-[2px] border-[1.5px] border-[#a04f9e] bg-[#2c0527] text-[9px] leading-none font-bold text-[#ffdcf8]">Xd</div> },
];

function Taskbar() {
  return (
    <div className="flex h-[30px] shrink-0 items-stretch bg-[#004a4f] text-white">
      <div className="-ml-[0.5px] flex">
        {APPS.map((a) => (
          <div key={a.n} className={`relative flex w-[37px] items-center justify-center ${a.act ? 'bg-[linear-gradient(90deg,transparent_0,transparent_1px,#00797c_1px,#00797c_33px,#00605f_33px)]' : ''}`}>
            {a.i}
            {a.run && <span className="absolute bottom-0 left-[4.5px] h-[2px] w-[28px] bg-[#8ee3ea]" />}
            {a.act && <span className="absolute bottom-0 left-px h-[2px] w-[36px] bg-[#8ee3ea]" />}
          </div>
        ))}
      </div>
      <div className="ml-auto flex items-center text-[12px] tracking-[-0.3px]">
        <svg className="h-[8px] w-[13px]" viewBox="0 0 13 8" fill="none" stroke="#fff" strokeWidth="1.200"><path d="M0.500 7L6.500 1L12.500 7" /></svg>
        <svg className="ml-[20px] h-[13px] w-[13px]" viewBox="0 0 13 13" fill="none" stroke="#d5e4e5" strokeWidth="1.200"><path d="M1 12.500A11.500 11.500 0 0 1 12.500 1M4 12.500A8.500 8.500 0 0 1 12.500 4M7 12.500A5.500 5.500 0 0 1 12.500 7" /><circle cx="11.500" cy="11.500" r="1.400" fill="#fff" stroke="none" /></svg>
        <svg className="ml-[16px] h-[12px] w-[17px]" viewBox="0 0 17 12" fill="none" stroke="#fff"><path d="M5.500 3.500H15.500V10.500H4.500V8M16.500 5.500V8.500M1.500 0V2.500M4.500 0V2.500M3 6.500V10.500H4.500" /><path d="M0.500 2.500H5.500V4.500Q5.500 6.500 3 6.500Q0.500 6.500 0.500 4.500Z" fill="#fff" stroke="none" /><path d="M6.500 5H14V9H6.500Z" fill="#fff" stroke="none" /></svg>
        <span className="ml-[13px] w-[38px]">ENG</span>
        <span className="w-[65px] whitespace-nowrap">9:47 PM</span>
        <svg className="h-[16px] w-[16px]" viewBox="0 0 16 16"><path d="M0 0H16V13H10.500L8 16L5.500 13H0Z" fill="#fff" /><path d="M3 3.500H13M3 6.500H13M3 9.500H9" stroke="#004a4f" /></svg>
        <span className="ml-[20px] mr-[4px] h-[30px] w-px bg-[#5f8d90]" />
      </div>
    </div>
  );
}

export default function App() {
  return (
    <div className="relative flex h-[1080px] w-[1920px] flex-col overflow-hidden bg-[#e4e4e4] font-['Open_Sans','Noto_Sans',sans-serif]">
      <TitleBar />
      <Toolbar />
      <div className="flex grow">
        <ToolRail />
      </div>
      <Taskbar />
      {BOARDS.map((b) => <Artboard key={`${b.x}-${b.y}`} {...b} />)}
      <Wires />
      <svg className="absolute left-[1645px] top-[1045px] h-[18px] w-[12px]" viewBox="0 0 12 18"><path d="M0.500 0.500V14L3.500 11.200L6 16.800L8.300 15.800L6 10.500H10.500Z" fill="#000" stroke="#fff" strokeWidth="0.600" /></svg>
    </div>
  );
}
